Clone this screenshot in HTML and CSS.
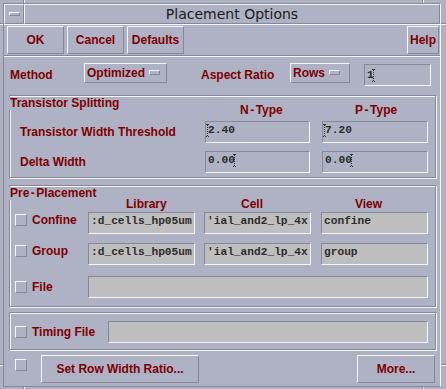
FILE: index.html
```html
<!DOCTYPE html>
<html>
<head>
<meta charset="utf-8">
<title>Placement Options</title>
<link rel="stylesheet" href="styles.css">
</head>
<body>
<div class="wm">
  <i class="tick tv tt1"></i><i class="tick tv tt2"></i>
  <i class="tick tv tb1"></i><i class="tick tv tb2"></i>
  <i class="tick th tl1"></i><i class="tick th tl2"></i>
  <i class="tick th tr1"></i><i class="tick th tr2"></i>
  <div class="win">
    <div class="titlebar">
      <div class="menubtn"><span class="menubar"></span></div>
      <div class="title">Placement Options</div>
    </div>
    <div class="client">
      <div class="actions">
        <button class="btn w57">OK</button>
        <button class="btn w57">Cancel</button>
        <button class="btn w57">Defaults</button>
        <button class="btn help">Help</button>
      </div>
      <div class="sep"></div>

      <div class="method">
        <span class="mlabel method-lbl">Method</span>
        <div class="opt opt-method"><span>Optimized</span><i class="ind"></i></div>
        <span class="mlabel aspect-lbl">Aspect Ratio</span>
        <div class="opt opt-rows"><span>Rows</span><i class="ind"></i></div>
        <div class="field ratio">1<span class="caret"></span></div>
      </div>

      <div class="frame ts">
        <div class="ftitle">Transistor Splitting</div>
        <div class="thead">
          <span class="hn">N<span class="hy">-</span>Type</span>
          <span class="hp">P<span class="hy">-</span>Type</span>
        </div>
        <div class="trow">
          <span class="rlabel">Transistor Width Threshold</span>
          <div class="field nf"><span class="caret"></span>2.40</div>
          <div class="field pf"><span class="caret"></span>7.20</div>
        </div>
        <div class="trow">
          <span class="rlabel">Delta Width</span>
          <div class="field nf">0.00<span class="caret"></span></div>
          <div class="field pf">0.00<span class="caret"></span></div>
        </div>
      </div>

      <div class="frame pp">
        <div class="ftitle">Pre<span class="hy">-</span>Placement</div>
        <div class="phead">
          <span class="h-lib">Library</span>
          <span class="h-cell">Cell</span>
          <span class="h-view">View</span>
        </div>
        <div class="prow up">
          <div class="chk-cell"><i class="chk"></i><span>Confine</span></div>
          <div class="field gray lib">:d_cells_hp05um</div>
          <div class="field gray cell">'ial_and2_lp_4x</div>
          <div class="field gray view">confine</div>
        </div>
        <div class="prow up r2">
          <div class="chk-cell"><i class="chk"></i><span>Group</span></div>
          <div class="field gray lib">:d_cells_hp05um</div>
          <div class="field gray cell">'ial_and2_lp_4x</div>
          <div class="field gray view">group</div>
        </div>
        <div class="prow r3">
          <div class="chk-cell"><i class="chk"></i><span>File</span></div>
          <div class="field gray filef"></div>
        </div>
      </div>

      <div class="frame tm">
        <div class="prow">
          <div class="chk-cell wide"><i class="chk"></i><span>Timing File</span></div>
          <div class="field gray timef"></div>
        </div>
      </div>

      <div class="bottom">
        <i class="chk bchk"></i>
        <button class="btn setrow">Set Row Width Ratio...</button>
        <button class="btn more">More...</button>
      </div>
    </div>
  </div>
</div>
</body>
</html>
```

FILE: styles.css
```css
:root {
  --bg: #aeb2c4;
  --lt: #f6f6fa;
  --dk: #858899;
  --red: #7e0000;
  --fieldgray: #bebebe;
  --ink: #2c2c2c;
}

html, body {
  margin: 0;
  background: var(--bg);
}

body {
  font-family: "Liberation Sans", Arial, sans-serif;
  font-weight: bold;
  font-size: 12px;
  color: var(--red);
}

.wm {
  position: relative;
  width: 446px;
  height: 389px;
  box-sizing: border-box;
  padding: 3px 5px 2px 3px;
  background: var(--bg);
  overflow: hidden;
}

.tick {
  position: absolute;
  display: block;
  background: var(--dk);
}
.tv { width: 1px; height: 3px; box-shadow: 1px 0 0 var(--lt); }
.th { height: 1px; width: 3px; box-shadow: 0 1px 0 var(--lt); }
.tt1 { left: 23px; top: 0; }
.tt2 { left: 422px; top: 0; }
.tb1 { left: 23px; bottom: 0; height: 2px; }
.tb2 { left: 422px; bottom: 0; height: 2px; }
.tl1 { left: 0; top: 23px; }
.tl2 { left: 0; top: 364px; }
.tr1 { right: 0; top: 23px; width: 5px; }
.tr2 { right: 0; top: 364px; width: 5px; }

.win {
  height: 100%;
  box-sizing: border-box;
  border: 1px solid var(--dk);
  border-right-color: var(--lt);
  display: flex;
  flex-direction: column;
}

.titlebar {
  display: flex;
  height: 20px;
  flex: none;
}

.menubtn {
  width: 20px;
  box-sizing: border-box;
  border: 1px solid;
  border-color: var(--lt) var(--dk) var(--dk) var(--lt);
  display: flex;
  align-items: center;
  justify-content: center;
}

.menubar {
  width: 11px;
  height: 4px;
  box-sizing: border-box;
  border: 1px solid;
  border-color: var(--lt) var(--dk) var(--dk) var(--lt);
}

.title {
  flex: 1;
  box-sizing: border-box;
  border: 1px solid;
  border-color: var(--lt) var(--dk) var(--dk) var(--lt);
  font-family: "DejaVu Sans", sans-serif;
  font-weight: normal;
  font-size: 14px;
  line-height: 18px;
  color: #1a1a1a;
  text-align: center;
}

.client {
  flex: 1;
  border-top: 1px solid var(--lt);
  padding-top: 1px;
  display: flex;
  flex-direction: column;
  min-height: 0;
}

.actions {
  display: flex;
  gap: 3px;
  height: 28px;
  padding: 0 1px 0 3px;
  flex: none;
}

.btn {
  font: inherit;
  color: var(--red);
  background: var(--bg);
  border: 1px solid;
  border-color: var(--lt) var(--dk) var(--dk) var(--lt);
  padding: 0;
  margin: 0;
  box-sizing: border-box;
  height: 28px;
  line-height: 26px;
  text-align: center;
  white-space: nowrap;
}
.w57 { width: 57px; }
.help { width: 32px; margin-left: auto; }

.sep {
  flex: none;
  height: 0;
  margin-top: 1px;
  border-top: 1px solid var(--dk);
  border-bottom: 1px solid var(--lt);
}

.method {
  flex: none;
  display: flex;
  align-items: flex-start;
  height: 38px;
  padding-left: 6px;
}
.mlabel {
  margin-top: 11px;
  line-height: 14px;
  white-space: nowrap;
}
.method-lbl { width: 74px; }
.aspect-lbl { margin-left: 34px; width: 89px; }

.opt {
  margin-top: 6px;
  height: 20px;
  box-sizing: border-box;
  border: 1px solid;
  border-color: var(--lt) var(--dk) var(--dk) var(--lt);
  display: flex;
  align-items: center;
  padding-left: 2px;
  line-height: 14px;
}
.opt-method { width: 83px; }
.opt-rows { width: 60px; }
.ind {
  display: block;
  width: 11px;
  height: 5px;
  box-sizing: border-box;
  border: 1px solid;
  border-color: var(--lt) var(--dk) var(--dk) var(--lt);
  margin-left: 4px;
  margin-bottom: 2px;
}

.field {
  box-sizing: border-box;
  height: 22px;
  border: 1px solid;
  border-color: var(--dk) var(--lt) var(--lt) var(--dk);
  background: var(--bg);
  font-family: "Liberation Mono", "Courier New", monospace;
  font-weight: bold;
  font-size: 11.2px;
  line-height: 14px;
  color: var(--ink);
  padding: 1px 0 0 2px;
  white-space: nowrap;
  overflow: hidden;
}
.field.gray { background: var(--fieldgray); }
.ratio { margin-left: 14px; width: 67px; margin-top: 7px; padding-top: 3px; }

.caret {
  display: inline-block;
  width: 0;
  height: 14px;
  vertical-align: top;
  position: relative;
}
.caret::before {
  content: "";
  position: absolute;
  left: -1px;
  top: 1px;
  height: 12px;
  border-left: 1px dotted #333;
}
.caret::after {
  content: "";
  position: absolute;
  left: -2px;
  top: 1px;
  width: 3px;
  height: 11px;
  border-top: 1px dotted #333;
  border-bottom: 1px dotted #333;
}

.frame {
  position: relative;
  flex: none;
  box-sizing: border-box;
  margin-left: 5px;
  width: 427px;
  border: 1px solid var(--dk);
  box-shadow: inset 1px 1px 0 var(--lt), 1px 1px 0 var(--lt);
}
.ftitle {
  position: absolute;
  top: 1px;
  left: -1px;
  padding: 0 2px 0 1px;
  background: var(--bg);
  line-height: 13px;
  white-space: nowrap;
}
.hy { margin: 0 1.5px; }

.ts { height: 83px; }
.thead {
  display: flex;
  height: 25px;
  box-sizing: border-box;
  padding-top: 7px;
  line-height: 14px;
}
.hn { margin-left: 230px; width: 115px; }
.trow {
  display: flex;
  align-items: center;
  height: 22px;
}
.trow + .trow { margin-top: 8px; }
.rlabel {
  width: 185px;
  padding-left: 10px;
  line-height: 14px;
  white-space: nowrap;
}
.nf { width: 105px; }
.pf { width: 106px; margin-left: 12px; }

.pp { height: 122px; margin-top: 7px; }
.phead {
  display: flex;
  height: 26px;
  box-sizing: border-box;
  padding-top: 11px;
  line-height: 14px;
}
.h-lib { margin-left: 116px; width: 115px; }
.h-cell { width: 114px; }

.prow {
  display: flex;
  align-items: center;
  height: 22px;
}
.prow.r2 { margin-top: 9px; }
.prow.r3 { margin-top: 11px; }
.chk-cell {
  width: 78px;
  box-sizing: border-box;
  display: flex;
  align-items: center;
  gap: 5px;
  padding-left: 5px;
  line-height: 14px;
  white-space: nowrap;
}
.chk-cell.wide { width: 98px; }
.prow.up .chk-cell { align-self: flex-start; padding-top: 1px; }
.chk {
  display: block;
  flex: none;
  width: 12px;
  height: 12px;
  box-sizing: border-box;
  border: 1px solid;
  border-color: var(--lt) var(--dk) var(--dk) var(--lt);
}
.lib { width: 107px; }
.cell { width: 107px; margin-left: 9px; }
.view { width: 107px; margin-left: 10px; }
.filef { width: 340px; }

.tm { height: 38px; margin-top: 5px; padding-top: 8px; }
.timef { width: 320px; }

.bottom {
  flex: none;
  display: flex;
  align-items: flex-start;
  height: 28px;
  margin-top: 5px;
  padding: 0 5px 0 11px;
}
.bchk { margin-top: 4px; }
.setrow { margin-left: 14px; width: 158px; }
.more { margin-left: auto; width: 78px; }
```
